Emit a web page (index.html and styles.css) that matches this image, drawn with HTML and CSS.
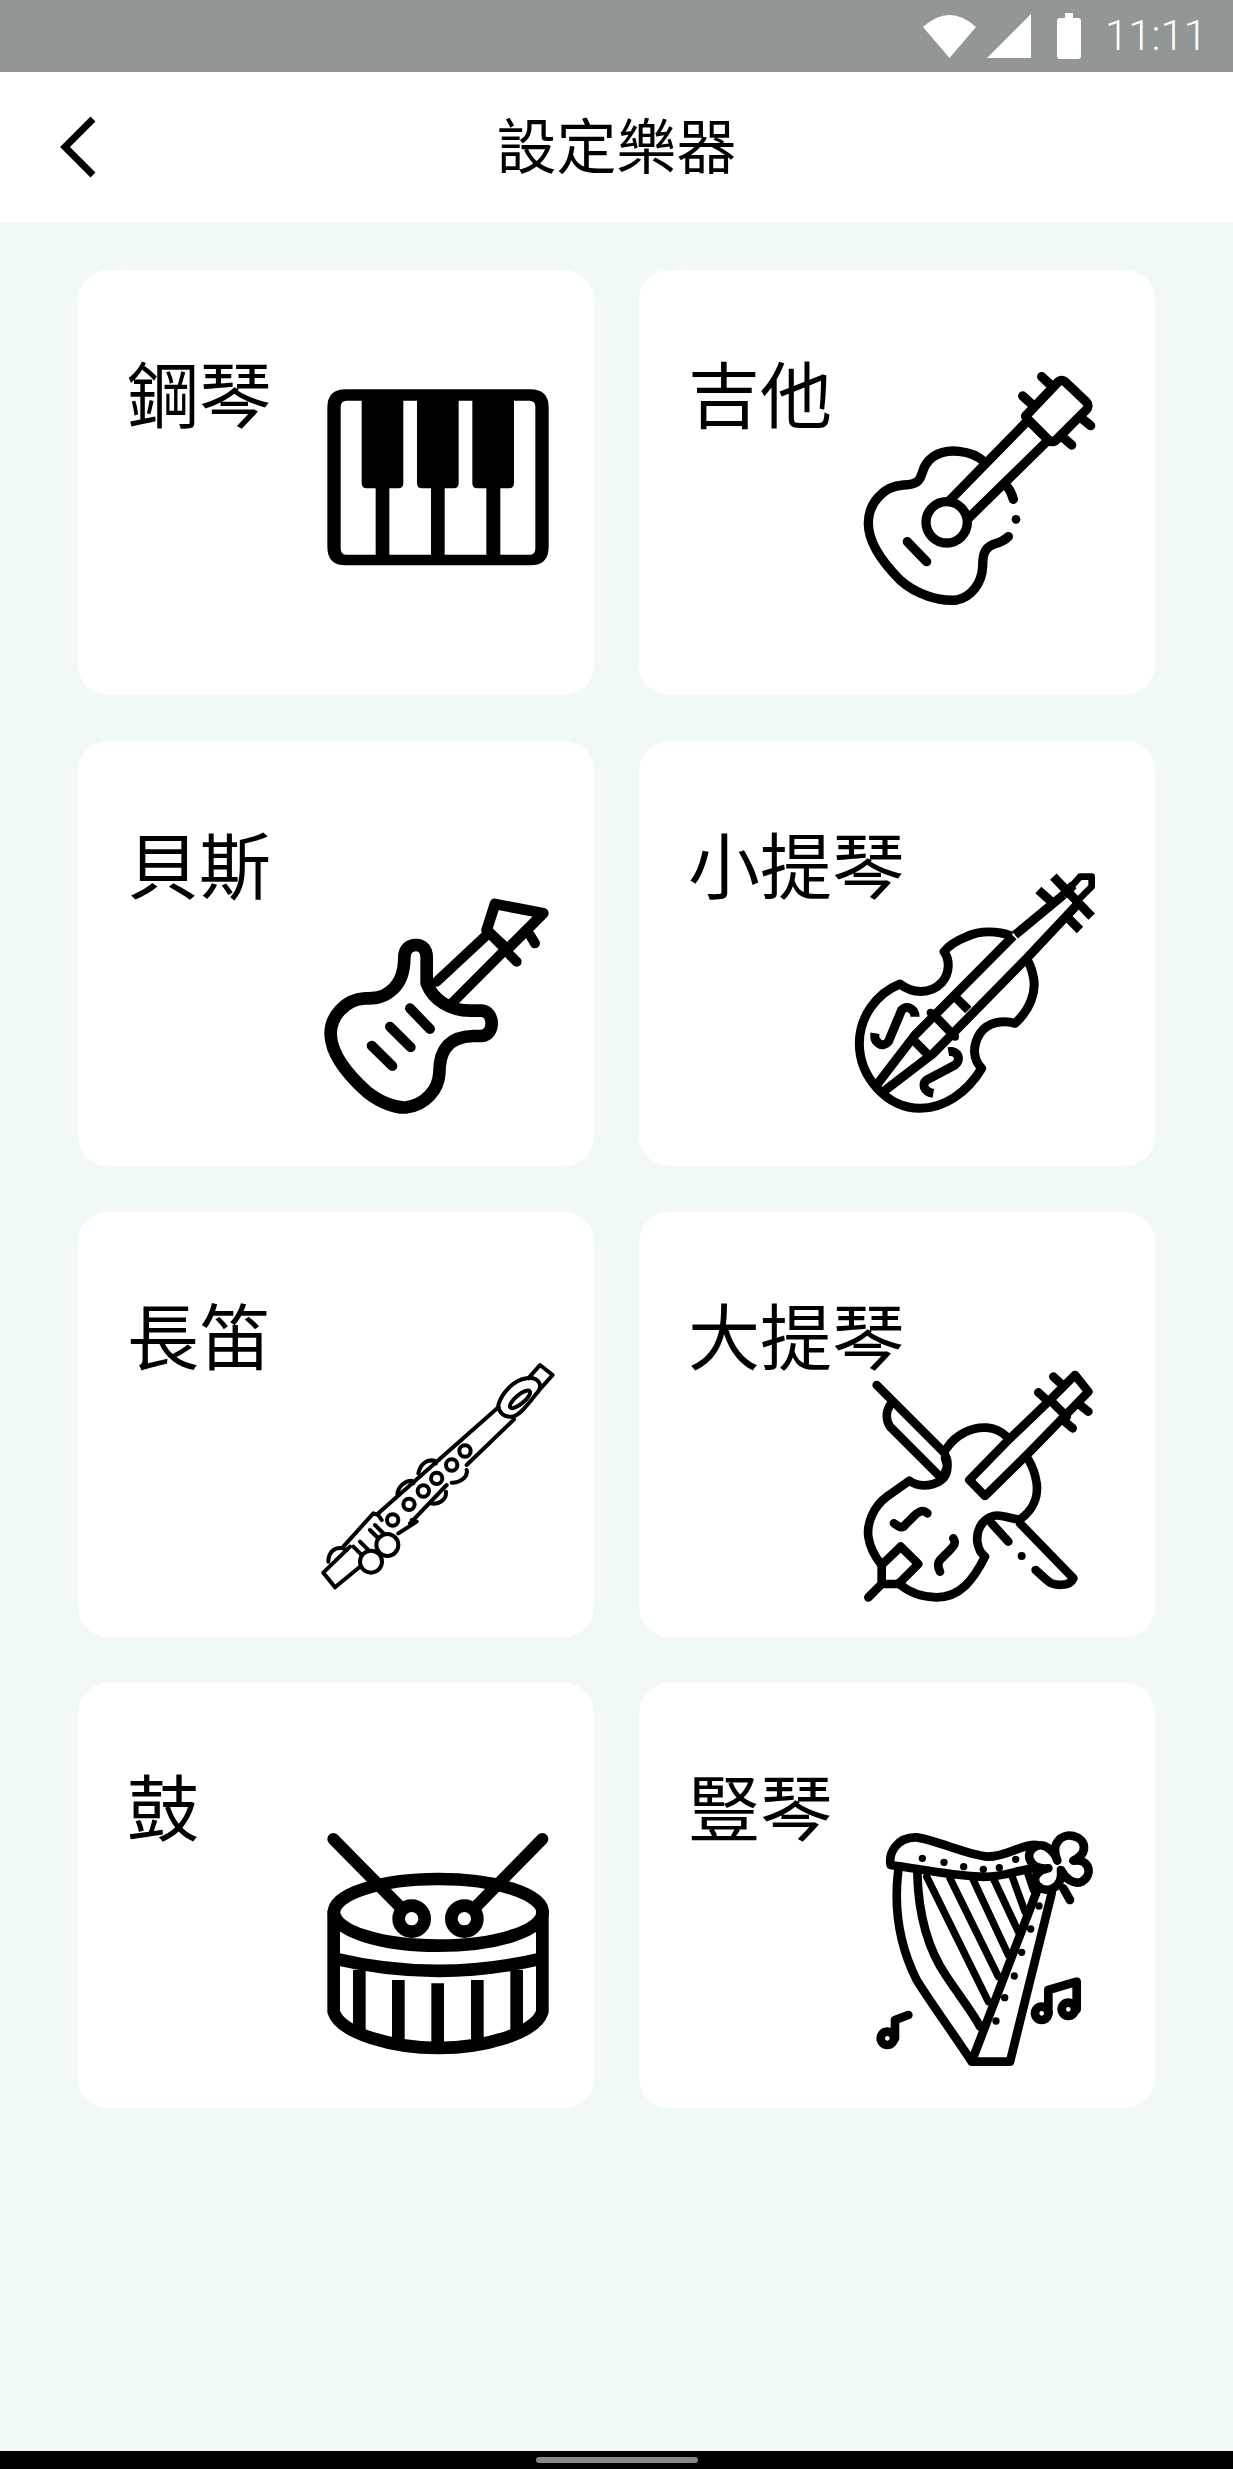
FILE: index.html
```html
<!DOCTYPE html>
<html lang="zh-Hant">
<head>
<meta charset="utf-8">
<title>設定樂器</title>
<link rel="stylesheet" href="styles.css">
</head>
<body>
<div class="screen">
  <div class="status">
    <svg class="st-wifi" viewBox="0 0 53 43"><path d="M0 12Q26.500-12 53 12L26.500 43Z"/></svg>
    <svg class="st-signal" viewBox="0 0 44 44"><path d="M44 0V44H0Z"/></svg>
    <svg class="st-battery" viewBox="0 0 24 46"><path d="M8 0H16V5H21Q24 5 24 8V43Q24 46 21 46H3Q0 46 0 43V8Q0 5 3 5H8Z"/></svg>
    <span class="st-time">11:11</span>
  </div>
  <header class="bar">
    <svg class="back" viewBox="0 0 40 64"><path d="M33 4L5 32L33 60"/></svg>
    <h1 class="title">設定樂器</h1>
  </header>
  <main class="grid">
    <section class="card">
      <h2 class="label">鋼琴</h2>
      <svg class="icon" viewBox="-6 0 780 900">
        <path class="solid" fill-rule="evenodd" d="M137 88H691Q746 88 746 143V561Q746 616 691 616H137Q82 616 82 561V143Q82 88 137 88ZM140 122Q122 122 122 140V566Q122 584 140 584H227V385H200Q185 385 185 370V122ZM310 122V370Q310 385 295 385H268V584H393V385H366Q351 385 351 370V122ZM476 122V370Q476 385 461 385H434V584H559V385H532Q517 385 517 370V122ZM642 122V370Q642 385 627 385H601V584H688Q706 584 706 566V140Q706 122 688 122Z"/>
      </svg>
    </section>
    <section class="card">
      <h2 class="label">吉他</h2>
      <svg class="icon line w28" viewBox="57 0 780 900">
        <path d="M432 305C395 270 320 262 280 290C250 310 250 335 240 355C232 372 210 375 190 375C130 378 85 430 85 490C85 550 130 610 180 660C230 705 300 725 350 720C395 710 425 670 428 620C428 590 430 565 460 553C480 548 495 540 505 530"/>
        <path d="M325 425L565 180M385 475L625 240M565 180L625 240"/>
        <path d="M560 165L652 68Q665 55 678 68L738 125Q750 137 738 150L650 238Q638 250 625 240L565 180Q552 170 560 165Z"/>
        <path d="M605 50L635 78M548 108L578 135M725 175L752 197M672 235L695 255"/>
        <circle cx="320" cy="487" r="62"/>
        <path d="M202 545L260 605M500 378C512 392 517 405 520 418"/>
        <circle class="dot" cx="528" cy="478" r="13"/>
      </svg>
    </section>
    <section class="card">
      <h2 class="label">貝斯</h2>
      <svg class="icon line w38" viewBox="-36 -147 780 900">
        <path d="M318 195C295 195 283 210 283 232C283 270 275 310 240 335C215 355 190 355 165 355C105 358 60 410 62 465C65 530 120 590 170 635C215 670 260 685 290 682C345 675 385 630 388 580C388 530 400 470 490 468L515 468C555 465 555 395 515 392L480 392C420 392 370 360 350 310L350 232C350 210 340 195 318 195Z"/>
        <path class="w30" d="M380 305L530 165M430 365L590 205M530 150L590 205M660 165L675 190M600 225L620 245M300 385L360 447M240 440L302 502M185 497L247 558"/>
        <path class="w32" d="M530 150L555 72L700 100L590 210Z"/>
      </svg>
    </section>
    <section class="card">
      <h2 class="label">小提琴</h2>
      <svg class="icon line w27 butt" viewBox="57 -87 780 900">
        <path d="M515 228C470 212 420 212 380 230C350 242 325 258 312 275C330 300 330 340 305 368C270 405 215 400 180 372C110 400 58 470 58 550C58 650 140 745 240 745C310 745 380 700 425 625C400 600 395 560 420 520C445 485 490 480 525 490C570 450 590 395 580 350C575 325 570 310 558 295"/>
        <path d="M525 225L670 105M520 228L225 525L110 675M560 295L280 580L130 695M670 105L700 75M560 295L715 130"/>
        <path d="M350 415L385 450M225 545L260 580M275 458L345 530M640 50L755 170M595 90L640 130M680 170L720 210"/>
        <path class="w20" d="M680 95L720 50H755V80L715 120"/>
        <circle class="dot" cx="272" cy="458" r="12"/>
        <circle class="dot" cx="345" cy="530" r="12"/>
        <path d="M225 470C225 445 200 435 185 450L145 545C130 565 100 550 105 520"/>
        <path d="M325 575C355 570 365 600 345 615L260 660C245 670 250 695 280 700"/>
      </svg>
    </section>
    <section class="card">
      <h2 class="label">長笛</h2>
      <svg class="icon line w12" viewBox="-36 -144 780 900">
        <path d="M655 85L690 45L728 75L692 115"/>
        <path d="M565 165C575 130 610 90 650 85C690 80 700 110 680 130C660 155 625 205 600 200C580 200 565 185 565 165Z"/>
        <ellipse cx="630" cy="148" rx="38" ry="13" transform="rotate(-40 630 148)"/>
        <path d="M565 172L205 490M120 590L40 668L75 712L150 650M612 208L470 345M410 405L300 520"/>
        <circle cx="465" cy="303" r="17"/>
        <circle cx="425" cy="345" r="17"/>
        <circle cx="380" cy="385" r="17"/>
        <circle cx="340" cy="423" r="17"/>
        <circle cx="297" cy="463" r="17"/>
        <circle cx="248" cy="510" r="17"/>
        <path d="M325 370C330 345 350 325 375 333L378 340M262 432C265 410 285 392 305 392L310 400M425 398C450 400 475 380 470 360M362 460C385 465 410 450 408 425M55 635C55 605 75 590 100 595L110 600M100 590L190 490L205 495L215 510M265 550L320 515L305 510M130 590L160 620M150 575L180 605M180 540L210 570M195 525L225 555"/>
        <circle class="paper" cx="232" cy="585" r="33"/>
        <circle class="paper" cx="183" cy="635" r="33"/>
      </svg>
    </section>
    <section class="card">
      <h2 class="label">大提琴</h2>
      <svg class="icon line w26" viewBox="27 -174 780 900">
        <path d="M80 75L285 280M120 135C105 160 110 185 120 200L265 345M285 285C300 310 290 340 270 355"/>
        <path d="M290 265C320 220 370 200 410 203C435 205 455 215 470 230M285 295C300 330 290 360 250 372C220 380 195 375 178 362L110 410C70 440 50 490 55 530C60 565 75 590 95 615M145 670C180 700 220 712 260 712C330 712 370 660 405 590C380 570 375 530 390 500C405 475 430 462 455 468C480 472 500 480 510 478C550 450 565 410 560 370C555 335 545 315 535 298"/>
        <path d="M470 245L358 360L405 408L535 280L715 95L675 45L595 125ZM605 125L650 170M610 50L640 78M565 97L595 125M690 135L715 155M645 185L668 205"/>
        <path d="M425 490L475 545M510 490L670 655C660 680 610 680 590 660L557 630"/>
        <circle class="dot" cx="515" cy="588" r="12"/>
        <path d="M232 460C215 445 200 460 190 470L165 495C155 510 140 495 132 490M310 535C320 550 310 560 300 570L270 600C262 610 265 625 270 635"/>
        <path d="M55 712L95 672L95 615L152 560L205 612L145 672L95 672"/>
      </svg>
    </section>
    <section class="card">
      <h2 class="label">鼓</h2>
      <svg class="icon line w38" viewBox="-36 -141 780 900">
        <ellipse cx="385" cy="277" rx="313" ry="100"/>
        <path d="M71 277V575C90 640 250 684 385 684C520 684 680 640 697 575V277M71 415Q385 490 697 415"/>
        <path class="butt" d="M148 450V640M265 480V665M383 490V684M502 480V665M620 450V640"/>
        <path class="w36" d="M70 57L270 260M697 57L500 258"/>
        <circle class="paper" cx="305" cy="296" r="39"/>
        <circle class="paper" cx="463" cy="296" r="39"/>
      </svg>
    </section>
    <section class="card">
      <h2 class="label">豎琴</h2>
      <svg class="icon line w26" viewBox="-3 -141 780 900">
        <path d="M92 135C85 100 110 50 170 52C230 60 320 105 385 110C440 110 490 70 530 75M92 135C170 145 260 165 360 170C430 175 480 145 530 145"/>
        <path d="M115 150C100 270 120 380 170 480C220 560 280 640 335 725H450L575 220M172 160C175 280 205 390 260 470C300 530 340 580 360 620M335 725L530 215"/>
        <path class="w22" d="M200 170L385 545M270 175L415 470M340 180L445 405M400 175L475 335M455 165L495 275M500 150L520 210"/>
        <g class="dots">
          <circle cx="187" cy="115" r="11"/><circle cx="252" cy="127" r="11"/><circle cx="311" cy="140" r="11"/><circle cx="370" cy="148" r="11"/><circle cx="418" cy="143" r="11"/><circle cx="467" cy="118" r="11"/>
          <circle cx="408" cy="603" r="11"/><circle cx="434" cy="533" r="11"/><circle cx="463" cy="468" r="11"/><circle cx="485" cy="397" r="11"/><circle cx="512" cy="327" r="11"/><circle cx="537" cy="258" r="11"/>
        </g>
        <path class="paper" d="M592 122C570 70 605 40 640 48C680 58 685 100 640 122C690 115 700 165 665 185C640 195 615 175 603 150C610 205 560 225 530 195C515 172 535 150 565 145C505 150 490 95 530 78C555 68 585 95 592 122Z"/>
        <path d="M610 205L630 240M105 655V600L145 585M565 580V510L650 485V568"/>
        <circle cx="82" cy="655" r="20"/>
        <circle cx="545" cy="580" r="20"/>
        <circle cx="625" cy="568" r="20"/>
      </svg>
    </section>
  </main>
  <div class="nav"><span class="pill"></span></div>
</div>
</body>
</html>
```
FILE: styles.css
```css
* { box-sizing: border-box; }
html, body { margin: 0; padding: 0; }
body { font-family: "Noto Sans CJK TC", "Noto Sans", sans-serif; color: #000; }
.screen { width: 1233px; height: 2469px; display: flex; flex-direction: column; background: #f0f9f7; overflow: hidden; }

.status { height: 72px; flex: none; background: #929695; display: flex; align-items: flex-start; padding-right: 26px; justify-content: flex-end; }
.status svg { display: block; fill: #fff; }
.st-wifi { width: 53px; height: 43px; margin-top: 15px; }
.st-signal { width: 44px; height: 44px; margin: 14px 0 0 11px; }
.st-battery { width: 24px; height: 46px; margin: 13px 0 0 26px; }
.st-time { font-family: Roboto, sans-serif; font-size: 42px; line-height: 72px; color: #fff; margin-left: 24px; font-weight: 300; }

.bar { height: 150px; flex: none; background: #fff; display: grid; align-items: center; justify-items: center; }
.back { grid-area: 1 / 1; justify-self: start; width: 40px; height: 64px; margin-left: 60px; fill: none; stroke: #000; stroke-width: 7; }
.title { grid-area: 1 / 1; margin: 0 0 8px; font-size: 60px; font-weight: 400; line-height: 1; }

.grid { flex: 1; display: grid; grid-template-columns: 516px 516px; grid-auto-rows: 425px; gap: 46px 45px; padding: 48px 78px 0; align-content: start; }
.card { background: #fff; border-radius: 30px; display: grid; padding: 0 36px 35px 49px; }
.label { grid-area: 1 / 1; margin: 0; padding-top: 78px; font-size: 72px; font-weight: 400; line-height: 1.2; align-self: start; justify-self: start; }
.icon { grid-area: 1 / 1; width: 260px; height: 300px; justify-self: end; align-self: end; display: block; overflow: visible; }

.solid { fill: #000; }
.line { fill: none; stroke: #000; stroke-linecap: round; stroke-linejoin: round; }
.w12 { stroke-width: 12; }
.w20 { stroke-width: 20; }
.w22 { stroke-width: 22; }
.w26 { stroke-width: 26; }
.w27 { stroke-width: 27; }
.w28 { stroke-width: 28; }
.w30 { stroke-width: 30; }
.w32 { stroke-width: 32; }
.w36 { stroke-width: 36; }
.w38 { stroke-width: 38; }
.butt { stroke-linecap: butt; }
.dot, .dots circle { fill: #000; stroke: none; }
.paper { fill: #fff; }

.nav { height: 18px; flex: none; background: #000; display: flex; justify-content: center; align-items: center; }
.pill { width: 162px; height: 6px; border-radius: 3px; background: #888; }
```
